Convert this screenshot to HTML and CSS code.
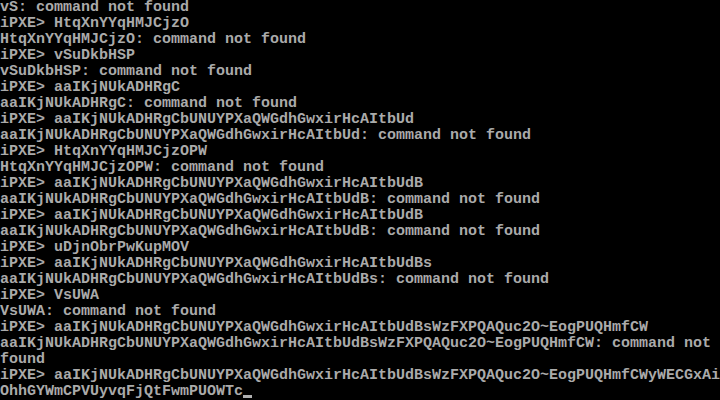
FILE: index.html
```html
<!DOCTYPE html>
<html>
<head>
<meta charset="utf-8">
<link rel="stylesheet" href="styles.css">
</head>
<body>
<pre class="console">vS: command not found
iPXE&gt; HtqXnYYqHMJCjzO
HtqXnYYqHMJCjzO: command not found
iPXE&gt; vSuDkbHSP
vSuDkbHSP: command not found
iPXE&gt; aaIKjNUkADHRgC
aaIKjNUkADHRgC: command not found
iPXE&gt; aaIKjNUkADHRgCbUNUYPXaQWGdhGwxirHcAItbUd
aaIKjNUkADHRgCbUNUYPXaQWGdhGwxirHcAItbUd: command not found
iPXE&gt; HtqXnYYqHMJCjzOPW
HtqXnYYqHMJCjzOPW: command not found
iPXE&gt; aaIKjNUkADHRgCbUNUYPXaQWGdhGwxirHcAItbUdB
aaIKjNUkADHRgCbUNUYPXaQWGdhGwxirHcAItbUdB: command not found
iPXE&gt; aaIKjNUkADHRgCbUNUYPXaQWGdhGwxirHcAItbUdB
aaIKjNUkADHRgCbUNUYPXaQWGdhGwxirHcAItbUdB: command not found
iPXE&gt; uDjnObrPwKupMOV
iPXE&gt; aaIKjNUkADHRgCbUNUYPXaQWGdhGwxirHcAItbUdBs
aaIKjNUkADHRgCbUNUYPXaQWGdhGwxirHcAItbUdBs: command not found
iPXE&gt; VsUWA
VsUWA: command not found
iPXE&gt; aaIKjNUkADHRgCbUNUYPXaQWGdhGwxirHcAItbUdBsWzFXPQAQuc2O~EogPUQHmfCW
aaIKjNUkADHRgCbUNUYPXaQWGdhGwxirHcAItbUdBsWzFXPQAQuc2O~EogPUQHmfCW: command not
found
iPXE&gt; aaIKjNUkADHRgCbUNUYPXaQWGdhGwxirHcAItbUdBsWzFXPQAQuc2O~EogPUQHmfCWyWECGxAi
OhhGYWmCPVUyvqFjQtFwmPUOWTc<span class="cursor"></span></pre>
</body>
</html>
```
FILE: styles.css
```css
html, body {
  margin: 0;
  padding: 0;
  background: #000;
  width: 720px;
  height: 400px;
  overflow: hidden;
}
.console {
  margin: 0;
  padding: 0;
  color: #aaaaaa;
  font-family: "Liberation Mono", "DejaVu Sans Mono", monospace;
  font-size: 15px;
  line-height: 16px;
  font-weight: bold;
  white-space: pre;
}
.cursor {
  display: inline-block;
  width: 9px;
  height: 3px;
  background: #b0b0b0;
  vertical-align: -3px;
}
```
